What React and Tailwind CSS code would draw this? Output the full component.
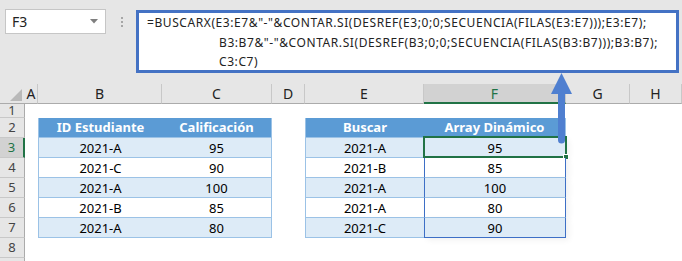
import React from "react";

// Excel-like sheet: formula bar with expanded formula, two small tables, spill range.

const COLS = [
  { k: "A", w: "w-[13px]" },
  { k: "B", w: "w-[124px]" },
  { k: "C", w: "w-[110px]" },
  { k: "D", w: "w-[33px]" },
  { k: "E", w: "w-[119px]" },
  { k: "F", w: "w-[142px]" },
  { k: "G", w: "w-[64px]" },
  { k: "H", w: "w-[52px]" },
];

const LEFT = [
  ["2021-A", "95"],
  ["2021-C", "90"],
  ["2021-A", "100"],
  ["2021-B", "85"],
  ["2021-A", "80"],
];

const RIGHT = [
  ["2021-A", "95"],
  ["2021-B", "85"],
  ["2021-A", "100"],
  ["2021-A", "80"],
  ["2021-C", "90"],
];

const cellFont = "font-['Noto_Sans',sans-serif] text-[13px] text-black";

function RowHeader({ n, h, selected }) {
  return (
    <div
      className={`w-[25px] ${h} shrink-0 flex items-center justify-center border-b border-[#c8c8c8] text-[13px] font-['Noto_Sans',sans-serif] ${
        selected
          ? "bg-[#d2d2d2] text-[#217346] border-r-2 border-r-[#217346]"
          : "bg-[#e6e6e6] text-[#444] border-r border-r-[#ababab]"
      }`}
    >
      {n}
    </div>
  );
}

function Blank({ w }) {
  return <div className={`${w} shrink-0`} />;
}

function FormulaBar() {
  return (
    <div className="h-[84px] bg-[#e6e6e6] flex items-start">
      <div className="ml-[5px] mt-[9px] w-[101px] h-[25px] bg-white border border-[#c6c6c6] flex items-center justify-between pl-[6px] pr-[7px]">
        <span className="text-[14px] text-[#222] font-['Noto_Sans',sans-serif]">F3</span>
        <svg width="8" height="5" viewBox="0 0 8 5">
          <path d="M0 0 L8 0 L4 4.5 Z" fill="#7f7f7f" />
        </svg>
      </div>
      <div className="ml-[15px] mt-[17px] flex flex-col gap-[2px]">
        <span className="w-[2px] h-[2px] bg-[#a6a6a6]" />
        <span className="w-[2px] h-[2px] bg-[#a6a6a6]" />
        <span className="w-[2px] h-[2px] bg-[#a6a6a6]" />
      </div>
      <div className="ml-[13px] mt-[10px] w-[543px] h-[63px] bg-white border-[3px] border-[#4472c4] pl-[8px] overflow-hidden">
        <div className="font-['Noto_Sans',sans-serif] text-[12px] tracking-[0.58px] leading-[19.5px] text-[#222] whitespace-pre">
          <div>=BUSCARX(E3:E7&amp;"-"&amp;CONTAR.SI(DESREF(E3;0;0;SECUENCIA(FILAS(E3:E7)));E3:E7);</div>
          <div className="pl-[72px]">B3:B7&amp;"-"&amp;CONTAR.SI(DESREF(B3;0;0;SECUENCIA(FILAS(B3:B7)));B3:B7);</div>
          <div className="pl-[72px]">C3:C7)</div>
        </div>
      </div>
    </div>
  );
}

function ColumnHeaders() {
  return (
    <div className="flex h-[20px]">
      <div className="w-[25px] shrink-0 bg-[#e6e6e6] border-b border-[#ababab] flex items-end justify-end pr-[3px] pb-[2px]">
        <svg width="12" height="12" viewBox="0 0 12 12">
          <path d="M12 0 L12 12 L0 12 Z" fill="#b9b9b9" />
        </svg>
      </div>
      {COLS.map((c) => (
        <div
          key={c.k}
          className={`${c.w} shrink-0 flex items-center justify-center text-[14px] font-['Noto_Sans',sans-serif] border-r border-r-[#c8c8c8] ${
            c.k === "F"
              ? "bg-[#d2d2d2] text-[#217346] border-b-2 border-b-[#217346]"
              : "bg-[#e6e6e6] text-[#222] border-b border-b-[#ababab]"
          }`}
        >
          {c.k}
        </div>
      ))}
    </div>
  );
}

function HeaderRow() {
  const hdr =
    "h-[20px] shrink-0 bg-[#5b9bd5] text-white font-bold flex items-center justify-center pt-[1px] border-b border-[#9bc2e6] font-['Noto_Sans',sans-serif] text-[13px]";
  return (
    <div className="flex">
      <RowHeader n="2" h="h-[20px]" />
      <Blank w="w-[13px]" />
      <div className={`w-[124px] ${hdr} border-l border-l-[#9bc2e6]`}>ID Estudiante</div>
      <div className={`w-[110px] ${hdr} border-r border-r-[#9bc2e6]`}>Calificación</div>
      <Blank w="w-[33px]" />
      <div className={`w-[119px] ${hdr} border-l border-l-[#9bc2e6]`}>Buscar</div>
      <div className={`w-[142px] ${hdr} border-r border-r-[#9bc2e6]`}>Array Dinámico</div>
      <Blank w="w-[64px]" />
      <Blank w="w-[52px]" />
    </div>
  );
}

function DataRow({ i }) {
  const n = i + 3;
  const band = i % 2 === 0 ? "bg-[#ddebf7]" : "bg-white";
  const base = `h-[20px] shrink-0 flex items-center justify-center pt-[2px] ${cellFont} ${band}`;
  const last = i === 4;
  return (
    <div className="flex">
      <RowHeader n={String(n)} h="h-[20px]" selected={n === 3} />
      <Blank w="w-[13px]" />
      <div className={`w-[124px] ${base} border-l border-b border-[#9bc2e6]`}>{LEFT[i][0]}</div>
      <div className={`w-[110px] ${base} border-r border-b border-[#9bc2e6]`}>{LEFT[i][1]}</div>
      <Blank w="w-[33px]" />
      <div className={`w-[119px] ${base} border-l border-b border-[#9bc2e6]`}>{RIGHT[i][0]}</div>
      <div
        className={`w-[142px] ${base} relative border-x border-x-[#3d6fc6] border-b ${
          last ? "border-b-[#3d6fc6]" : "border-b-[#9bc2e6]"
        } shadow-[3px_2px_6px_rgba(0,0,0,0.06)]`}
      >
        {RIGHT[i][1]}
        {n === 3 && (
          <div className="absolute -left-[2px] -top-[2px] -right-[2px] -bottom-[1px] border-2 border-[#217346]">
            <div className="absolute -right-[4px] -bottom-[4px] w-[6px] h-[6px] bg-[#217346] border border-white" />
          </div>
        )}
      </div>
      <Blank w="w-[64px]" />
      <Blank w="w-[52px]" />
    </div>
  );
}

function EmptyRow({ n, h }) {
  return (
    <div className="flex">
      <RowHeader n={n} h={h} />
    </div>
  );
}

function Arrow() {
  return (
    <svg
      className="absolute left-[549px] top-[70px]"
      width="26"
      height="76"
      viewBox="0 0 26 76"
      aria-hidden="true"
    >
      <path d="M12.5 3 L23 24 L2 24 Z" fill="#4f7fd0" />
      <path d="M9 22 L16 22 L16 70 A3.5 3.5 0 0 1 9 70 Z" fill="#4f7fd0" />
    </svg>
  );
}

export default function App() {
  return (
    <div className="relative w-[682px] h-[261px] overflow-hidden bg-white">
      <FormulaBar />
      <ColumnHeaders />
      <EmptyRow n="1" h="h-[14px]" />
      <HeaderRow />
      {LEFT.map((_, i) => (
        <DataRow key={i} i={i} />
      ))}
      <EmptyRow n="8" h="h-[20px]" />
      <EmptyRow n="" h="h-[20px]" />
      <Arrow />
    </div>
  );
}
